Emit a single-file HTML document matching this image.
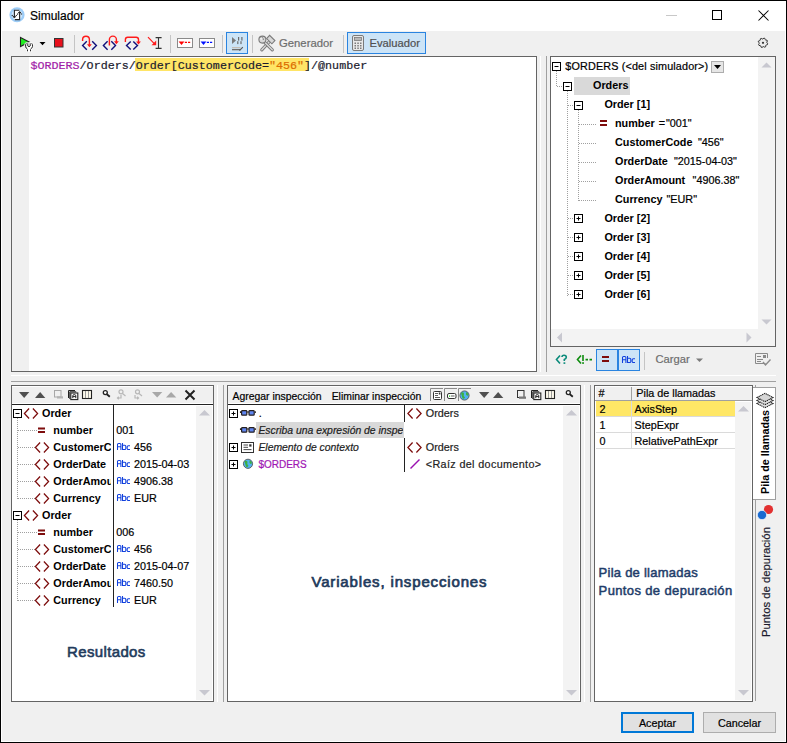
<!DOCTYPE html>
<html><head><meta charset="utf-8">
<style>
*{margin:0;padding:0;box-sizing:border-box}
html,body{width:787px;height:743px;overflow:hidden;background:#f0f0f0}
body{position:relative;font-family:"Liberation Sans",sans-serif;font-size:10.8px;color:#000}
.a{position:absolute}
.t{position:absolute;white-space:nowrap;line-height:16px;-webkit-text-stroke:0.2px currentColor}
.b{font-weight:bold;-webkit-text-stroke:0}
.box{position:absolute;border:1px solid #646464;background:#fff}
.sep{position:absolute;width:1px;background:#c8c8c8}
svg{position:absolute;overflow:visible}
.mono{font-family:"Liberation Mono",monospace}
</style></head><body>
<!-- window frame -->
<div class="a" style="left:0;top:0;width:787px;height:743px;border:1px solid #000;background:#f0f0f0"></div>
<div class="a" style="left:1px;top:1px;width:785px;height:741px;border-left:1px solid #fff;border-right:1px solid #fff;border-bottom:1px solid #fff"></div>
<!-- title bar -->
<div class="a" style="left:1px;top:1px;width:785px;height:30px;background:#fff"></div>
<div id="title">
<svg style="left:9px;top:7px" width="16" height="16" viewBox="0 0 16 16">
<circle cx="8" cy="7.75" r="7.6" fill="#9dcdf8"/>
<circle cx="8" cy="7.75" r="5.4" fill="#cfe7fc"/>
<rect x="5.4" y="3.3" width="5.2" height="9.3" fill="#fff"/>
<path d="M5.4 10 V3.3 H10.4 M5.8 12.6 H10.6 V5.6" fill="none" stroke="#252525" stroke-width="1.1"/>
<path d="M2.8 8.2 L5.4 10.5 L10.6 5 L13 7.4" fill="none" stroke="#252525" stroke-width="1.1" stroke-dasharray="1.2 0.7"/>
<path d="M3.9 9.2 H6.9 L5.4 11.2 Z M9.1 6 H12.1 L10.6 4 Z" fill="#252525"/>
</svg>
<div class="t" style="left:30px;top:8px;font-size:12px;color:#000">Simulador</div>
<div class="a" style="left:666px;top:15px;width:11px;height:1px;background:#c8c8c8"></div>
<div class="a" style="left:712px;top:10px;width:10px;height:10px;border:1px solid #000"></div>
<svg style="left:758px;top:10px" width="11" height="11" viewBox="0 0 11 11"><path d="M0.5 0.5 L10.5 10.5 M10.5 0.5 L0.5 10.5" stroke="#000" stroke-width="1.05"/></svg>
</div>
<div id="toolbar">
<div class="a" style="left:226px;top:32px;width:22px;height:22px;background:#cce4f7;border:1px solid #2a84e0"></div>
<div class="a" style="left:347px;top:32px;width:79px;height:22px;background:#cce4f7;border:1px solid #2a84e0"></div>
<div class="t" style="left:279px;top:35px;font-size:11.3px;color:#6d6d6d">Generador</div>
<div class="t" style="left:369.5px;top:35px;font-size:11.2px;color:#505050">Evaluador</div>
<svg style="left:0;top:0" width="787" height="743" viewBox="0 0 787 743">
<!-- separators -->
<g fill="#c4c4c4"><rect x="74" y="35" width="1" height="18"/><rect x="170" y="35" width="1" height="18"/><rect x="222" y="35" width="1" height="18"/><rect x="252" y="35" width="1" height="18"/><rect x="343" y="35" width="1" height="18"/></g>
<!-- play -->
<path d="M20.5 37.5 L29.2 42 L20.5 46.5 Z" fill="#22ee22" stroke="#222" stroke-width="1.1"/>
<path d="M24.3 44.5 Q24.3 42.5 26.5 42.2 H31.5 Q33.8 42.5 33.8 45.5 Q33.6 48.5 31.5 49.5 V52 H26.5 V49.5 Q24.3 48.5 24.3 45.5Z" fill="#fff" opacity="0.9"/>
<path d="M26.5 43.5 Q25.5 44.5 25.5 46 Q25.8 48.2 27.3 49" fill="#d8d8d8"/><path d="M26.3 43.3 Q25.2 44.6 25.4 46.3 Q25.8 48.3 27.4 49 M31.7 43.3 Q32.8 44.6 32.6 46.3 Q32.2 48.3 30.6 49 M27.8 43.3 V46 Q29 47.5 30.2 46 V43.3 M27.5 49.5 V51.3 M30.5 49.5 V51.3" fill="none" stroke="#2a2a2a" stroke-width="1"/>
<path d="M39.5 42 H45.5 L42.5 45.3 Z" fill="#000"/>
<rect x="54.5" y="38.5" width="8.5" height="8.5" fill="#e8101c" stroke="#333" stroke-width="1"/>
<!-- step into -->
<g fill="none" stroke-width="1.4">
<path d="M82.6 41 V39.6 A3.3 3.3 0 0 1 89.4 39.6 V46" stroke="#ff1a1a"/>
<path d="M86.8 41.3 L82.6 45.5 L86.8 49.8 M92.2 41.3 L96.4 45.5 L92.2 49.8" stroke="#10107a"/>
<path d="M107.6 41.3 L103.4 45.5 L107.6 49.8 M111.3 41.3 L115.5 45.5 L111.3 49.8" stroke="#10107a"/>
<path d="M109.4 45.5 V39.6 A3.4 3.4 0 0 1 116.4 39.6 V43" stroke="#ff1a1a"/>
<path d="M125.4 42 V39.5 A2.3 2.3 0 0 1 127.7 37.3 H136.2 A2.3 2.3 0 0 1 138.5 39.5 V43" stroke="#ff1a1a"/>
<path d="M130.7 41.4 L126.5 45.5 L130.7 49.6 M133.3 41.4 L137.5 45.5 L133.3 49.6" stroke="#10107a"/>
<path d="M148 37.2 L155 44.3" stroke="#ff1a1a" stroke-width="1.2"/>
<path d="M158.5 37.6 V48.4 M155.6 37.6 H161.6 M155.6 48.4 H161.6" stroke="#333" stroke-width="1.1"/>
</g>
<g fill="#ff1a1a">
<path d="M87 44.2 H91.8 L89.4 47.2 Z"/><path d="M114 41.3 H118.8 L116.4 44.3 Z"/><path d="M136.1 41.4 H140.9 L138.5 44.4 Z"/>
<path d="M156.2 40.5 V45.2 H151.5 Z"/>
</g>
<!-- breakpoints -->
<rect x="177.5" y="38.5" width="15" height="9" fill="#fff" stroke="#8a8a8a"/>
<path d="M178.6 41.6 H184.4 L181.5 45 Z" fill="#ff0000"/><path d="M184.8 42.4 h2.2 M188 42.4 h2.2" stroke="#ff0000" stroke-width="1.3"/>
<rect x="199.5" y="38.5" width="15" height="9" fill="#fff" stroke="#8a8a8a"/>
<path d="M200.6 41.6 H206.4 L203.5 45 Z" fill="#0010ff"/><path d="M206.8 42.4 h2.2 M210 42.4 h2.2" stroke="#0010ff" stroke-width="1.3"/>
<!-- pressed icon -->
<path d="M232 37 L236 40.5 L232 44 Z" fill="#7a7a7a"/>
<g fill="#6a6a6a"><rect x="238" y="37" width="1.2" height="3.6"/><rect x="237.2" y="41.2" width="1.2" height="2.9"/><rect x="241.3" y="37" width="1.2" height="3.6"/><rect x="240.4" y="41.2" width="1.2" height="2.9"/></g>
<rect x="232" y="47" width="8.5" height="1.3" fill="#c4bdb6"/><rect x="232" y="49" width="8" height="1.3" fill="#6e6e6e"/>
<path d="M239.5 50.6 L242.8 47.2" stroke="#555" stroke-width="1.1"/>
<!-- wrench/hammer -->
<g stroke-linecap="round">
<path d="M269.5 41.5 L261.8 49.8" stroke="#7a7a7a" stroke-width="3.2"/><path d="M269.5 41.5 L261.8 49.8" stroke="#dadada" stroke-width="1.3"/>
<path d="M264.2 41.8 L272.3 49.8" stroke="#7a7a7a" stroke-width="3.2"/><path d="M264.2 41.8 L272.3 49.8" stroke="#dadada" stroke-width="1.3"/>
</g>
<path d="M266.6 38.6 L269.6 35.4 L274.9 40.6 L271.9 43.8 Z" fill="#d8d8d8" stroke="#7a7a7a" stroke-width="1.1"/>
<circle cx="262.4" cy="39.6" r="3.5" fill="#d8d8d8" stroke="#7a7a7a" stroke-width="1.1"/>
<path d="M259.5 37.5 L262 37.2 L263.6 39.7" fill="none" stroke="#7a7a7a" stroke-width="1.1"/><circle cx="261.4" cy="38.5" r="1.2" fill="#f0f0f0"/>
<!-- calculator -->
<rect x="352.5" y="35.5" width="11" height="15" rx="1.5" fill="#e8e8e8" stroke="#7a7a7a"/>
<rect x="354.5" y="37.5" width="7" height="3" fill="#b8b8b8" stroke="#7a7a7a" stroke-width="0.8"/>
<g fill="#7a7a7a"><rect x="354.5" y="42.5" width="1.5" height="1.5"/><rect x="357.3" y="42.5" width="1.5" height="1.5"/><rect x="360" y="42.5" width="1.5" height="1.5"/><rect x="354.5" y="45" width="1.5" height="1.5"/><rect x="357.3" y="45" width="1.5" height="1.5"/><rect x="360" y="45" width="1.5" height="1.5"/><rect x="354.5" y="47.5" width="1.5" height="1.5"/><rect x="357.3" y="47.5" width="1.5" height="1.5"/><rect x="360" y="47.5" width="1.5" height="1.5"/></g>
<!-- gear -->
<path d="M767.70 43.75 L767.43 44.65 L766.23 44.98 L765.75 45.57 L765.65 46.80 L764.82 47.24 L763.75 46.63 L762.99 46.70 L762.05 47.50 L761.15 47.23 L760.82 46.03 L760.23 45.55 L759.00 45.45 L758.56 44.62 L759.17 43.55 L759.10 42.79 L758.30 41.85 L758.57 40.95 L759.77 40.62 L760.25 40.03 L760.35 38.80 L761.18 38.36 L762.25 38.97 L763.01 38.90 L763.95 38.10 L764.85 38.37 L765.18 39.57 L765.77 40.05 L767.00 40.15 L767.44 40.98 L766.83 42.05 L766.90 42.81 Z" fill="#ececec" stroke="#333" stroke-width="1"/>
<circle cx="763" cy="42.8" r="1.1" fill="#333"/>
</svg>
</div>
<div id="editor">
<div class="box" style="left:11px;top:56px;width:526px;height:316px"></div>
<div class="a" style="left:12px;top:57px;width:17px;height:314px;background:#f0f0f0"></div>
<div class="a" style="left:135px;top:58px;width:174px;height:13px;background:#ffe566"></div>
<div class="t mono" style="left:30.5px;top:59px;font-size:11.7px;line-height:14px;color:#1b1b2e"><span style="color:#a21ca8">$ORDERS</span>/Orders/Order[CustomerCode=<span style="color:#dc6c00">"456"</span>]/@number</div>
<div class="a" style="left:540px;top:56px;width:1px;height:316px;background:#fff"></div>
<div class="a" style="left:546px;top:56px;width:1px;height:316px;background:#a0a0a0"></div>
<!-- horizontal splitter -->
<div class="a" style="left:11px;top:375px;width:765px;height:1px;background:#fff"></div>
<div class="a" style="left:11px;top:381px;width:765px;height:1px;background:#a0a0a0"></div>
</div>
<div id="tree">
<div class="box" style="left:550px;top:56px;width:226px;height:291px"></div>
<div class="a" style="left:758px;top:57px;width:17px;height:272px;background:#f3f3f3"></div>
<div class="a" style="left:551px;top:329px;width:224px;height:17px;background:#f3f3f3"></div>
<div class="a" style="left:574px;top:77px;width:56px;height:18px;background:#d9d9d9"></div>
<div class="t " style="left:565.3px;top:57px;line-height:19px;letter-spacing:0.15px">$ORDERS (&lt;del simulador&gt;)</div>
<div class="t b" style="left:593px;top:76px;line-height:19px">Orders</div>
<div class="t b" style="left:604.4px;top:95px;line-height:19px">Order [1]</div>
<div class="t b" style="left:615px;top:114px;line-height:19px">number</div>
<div class="t " style="left:658.8px;top:114px;line-height:19px">=</div>
<div class="t " style="left:666px;top:114px;line-height:19px">"001"</div>
<div class="t b" style="left:615px;top:133px;line-height:19px">CustomerCode</div>
<div class="t " style="left:698px;top:133px;line-height:19px">"456"</div>
<div class="t b" style="left:615px;top:152px;line-height:19px">OrderDate</div>
<div class="t " style="left:674px;top:152px;line-height:19px">"2015-04-03"</div>
<div class="t b" style="left:615px;top:171px;line-height:19px">OrderAmount</div>
<div class="t " style="left:692.6px;top:171px;line-height:19px">"4906.38"</div>
<div class="t b" style="left:615px;top:190px;line-height:19px">Currency</div>
<div class="t " style="left:666.5px;top:190px;line-height:19px">"EUR"</div>
<div class="t b" style="left:604.4px;top:209px;line-height:19px">Order [2]</div>
<div class="t b" style="left:604.4px;top:228px;line-height:19px">Order [3]</div>
<div class="t b" style="left:604.4px;top:247px;line-height:19px">Order [4]</div>
<div class="t b" style="left:604.4px;top:266px;line-height:19px">Order [5]</div>
<div class="t b" style="left:604.4px;top:285px;line-height:19px">Order [6]</div>
<!-- tree bottom toolbar -->
<div class="a" style="left:596px;top:349px;width:22px;height:22px;background:#cce4f7;border:1px solid #2a84e0"></div>
<div class="a" style="left:618px;top:349px;width:22px;height:22px;background:#cce4f7;border:1px solid #2a84e0"></div>
<div class="t" style="left:655.5px;top:351px;font-size:11.2px;color:#6d6d6d">Cargar</div>
<svg style="left:0;top:0" width="787" height="743" viewBox="0 0 787 743">
<g stroke="#a0a0a0" stroke-width="1" stroke-dasharray="1 1" fill="none">
<path d="M556.5 71 V86 M557 86.5 H563"/>
<path d="M567.5 91 V296 M568 105.5 H574 M568 218.5 H574 M568 237.5 H574 M568 256.5 H574 M568 275.5 H574 M568 294.5 H574"/>
<path d="M578.5 110 V201 M579 124.5 H597 M579 143.5 H597 M579 162.5 H597 M579 181.5 H597 M579 200.5 H597"/>
</g>
<g fill="#fff" stroke="#000" stroke-width="1">
<rect x="552.5" y="62.5" width="8" height="8"/><rect x="563.5" y="82.5" width="8" height="8"/><rect x="574.5" y="101.5" width="8" height="8"/>
<rect x="574.5" y="214.5" width="8" height="8"/><rect x="574.5" y="233.5" width="8" height="8"/><rect x="574.5" y="252.5" width="8" height="8"/><rect x="574.5" y="271.5" width="8" height="8"/><rect x="574.5" y="290.5" width="8" height="8"/>
</g>
<g stroke="#000" stroke-width="1">
<path d="M554.5 66.5 H558.5 M565.5 86.5 H569.5 M576.5 105.5 H580.5"/>
<path d="M576.5 218.5 H580.5 M578.5 216.5 V220.5 M576.5 237.5 H580.5 M578.5 235.5 V239.5 M576.5 256.5 H580.5 M578.5 254.5 V258.5 M576.5 275.5 H580.5 M578.5 273.5 V277.5 M576.5 294.5 H580.5 M578.5 292.5 V296.5"/>
</g>
<g fill="#7e0d0d"><rect x="600" y="120" width="7" height="2"/><rect x="600" y="124" width="7" height="2"/></g>
<!-- dropdown button -->
<rect x="711.5" y="61.5" width="12" height="11" fill="#e6e6e6" stroke="#adadad"/>
<path d="M714 65 H721 L717.5 69 Z" fill="#000"/>
<!-- scroll arrows -->
<g fill="#c8c8d0">
<path d="M761.5 67.5 L766.5 62.5 L771.5 67.5 Z"/><path d="M761.5 319.5 L766.5 324.5 L771.5 319.5 Z"/>
<path d="M562 332.5 L557 337.5 L562 342.5 Z"/><path d="M746.5 332.5 L751.5 337.5 L746.5 342.5 Z"/>
</g>
<!-- bottom toolbar icons -->
<g fill="none" stroke="#0a8a7a" stroke-width="1.6"><path d="M560 355.5 L556.5 359.5 L560 363.5"/><path d="M562 357 Q562 355.3 564 355.3 Q566.3 355.3 566.3 357.3 Q566.3 358.8 564.3 359.5 V361"/></g>
<rect x="563.5" y="362.3" width="1.8" height="1.6" fill="#0a8a7a"/>
<g fill="none" stroke="#0e8c0e" stroke-width="1.6"><path d="M581 355.5 L577.5 359.5 L581 363.5"/><path d="M583 355 V361 M585.5 359.6 h2.5 M589.5 359.6 h2.5"/></g>
<rect x="582.2" y="362.2" width="1.7" height="1.7" fill="#0e8c0e"/>
<g fill="#7e0d0d"><rect x="602" y="356" width="7" height="2"/><rect x="602" y="360" width="7" height="2"/></g>
<rect x="644" y="352" width="1" height="18" fill="#c4c4c4"/>
<path d="M696 358.5 H703 L699.5 362 Z" fill="#7a7a7a"/>
<g fill="none" stroke="#8a8a8a" stroke-width="1"><path d="M765.5 363.5 H755.5 V353.5 H767.5 V358"/><path d="M757 356.5 H761 M757 359.5 H763 M757 361.5 H761"/><path d="M763 362 L765.5 365 L770.5 359.5" stroke-width="1.4"/></g>
<rect x="763" y="355" width="3" height="3" fill="#8a8a8a"/>
</svg>

</div>
<div class="a" style="left:217px;top:385px;width:1px;height:317px;background:#fff"></div>
<div class="a" style="left:223px;top:385px;width:1px;height:317px;background:#a0a0a0"></div>
<div class="a" style="left:584px;top:385px;width:1px;height:317px;background:#fff"></div>
<div class="a" style="left:590px;top:385px;width:1px;height:317px;background:#a0a0a0"></div>
<div id="results">
<div class="box" style="left:11px;top:385px;width:203px;height:317px;background:#fff"></div>
<div class="a" style="left:12px;top:386px;width:201px;height:18px;background:#f0f0f0;border-top:1px solid #fff;border-bottom:1px solid #fff"></div>
<div class="a" style="left:12px;top:404px;width:201px;height:1px;background:#222"></div>
<div class="a" style="left:196px;top:406px;width:16px;height:294px;background:#f3f3f3"></div>
<div class="a" style="left:113px;top:405px;width:1px;height:202px;background:#222"></div>
<div class="a" style="left:12px;top:405px;width:99px;height:210px;overflow:hidden">
<div class="t b" style="left:30px;top:0px;line-height:17px">Order</div>
<div class="t b" style="left:41.3px;top:17px;line-height:17px">number</div>
<div class="t b" style="left:41.3px;top:34px;line-height:17px">CustomerCode</div>
<div class="t b" style="left:41.3px;top:51px;line-height:17px">OrderDate</div>
<div class="t b" style="left:41.3px;top:68px;line-height:17px">OrderAmount</div>
<div class="t b" style="left:41.3px;top:85px;line-height:17px">Currency</div>
<div class="t b" style="left:30px;top:102px;line-height:17px">Order</div>
<div class="t b" style="left:41.3px;top:119px;line-height:17px">number</div>
<div class="t b" style="left:41.3px;top:136px;line-height:17px">CustomerCode</div>
<div class="t b" style="left:41.3px;top:153px;line-height:17px">OrderDate</div>
<div class="t b" style="left:41.3px;top:170px;line-height:17px">OrderAmount</div>
<div class="t b" style="left:41.3px;top:187px;line-height:17px">Currency</div>
</div>
<div class="t" style="left:116.3px;top:422px;line-height:17px">001</div>
<div class="t" style="left:134px;top:439px;line-height:17px">456</div>
<div class="t" style="left:134px;top:456px;line-height:17px">2015-04-03</div>
<div class="t" style="left:134px;top:473px;line-height:17px">4906.38</div>
<div class="t" style="left:134px;top:490px;line-height:17px">EUR</div>
<div class="t" style="left:116.3px;top:524px;line-height:17px">006</div>
<div class="t" style="left:134px;top:541px;line-height:17px">456</div>
<div class="t" style="left:134px;top:558px;line-height:17px">2015-04-07</div>
<div class="t" style="left:134px;top:575px;line-height:17px">7460.50</div>
<div class="t" style="left:134px;top:592px;line-height:17px">EUR</div>
<div class="t" style="left:67px;top:640px;font-size:15px;letter-spacing:0.36px;-webkit-text-stroke:0.6px #1f3b5c;line-height:24px;color:#1f3b5c">Resultados</div>
</div>
<div id="vars">
<div class="box" style="left:227px;top:385px;width:354px;height:317px;background:#fff"></div>
<div class="a" style="left:228px;top:386px;width:352px;height:18px;background:#f0f0f0;overflow:hidden;border-top:1px solid #fff;border-bottom:1px solid #fff">
<div class="t" style="left:4.6px;top:1px;font-size:10.4px;line-height:17px;color:#000">Agregar inspección</div>
<div class="t" style="left:103.7px;top:1px;font-size:10.4px;line-height:17px;color:#000">Eliminar inspección</div>
</div>
<div class="a" style="left:228px;top:404px;width:352px;height:1px;background:#222"></div>
<div class="a" style="left:563px;top:406px;width:16px;height:294px;background:#f3f3f3"></div>
<div class="a" style="left:256px;top:422px;width:148px;height:16px;background:#d9d9d9"></div>
<div class="a" style="left:404px;top:405px;width:1px;height:17px;background:#222"></div>
<div class="a" style="left:404px;top:438px;width:1px;height:34px;background:#222"></div>
<div class="t" style="left:258.8px;top:405px;line-height:17px">.</div>
<div class="a" style="left:256px;top:422px;width:147px;height:17px;overflow:hidden"><div class="t" style="left:2.4px;top:0;line-height:17px;font-style:italic;font-size:10.4px;color:#222">Escriba una expresión de inspección</div></div>
<div class="t" style="left:258.4px;top:439px;line-height:17px;font-style:italic;font-size:10.4px;color:#222">Elemento de contexto</div>
<div class="t" style="left:258.4px;top:456px;font-size:10px;line-height:17px;color:#a016b4">$ORDERS</div>
<div class="t" style="left:425.8px;top:405px;line-height:17px;color:#222">Orders</div>
<div class="t" style="left:425.8px;top:439px;line-height:17px;color:#222">Orders</div>
<div class="t" style="left:425.8px;top:456px;line-height:17px;letter-spacing:0.35px;color:#222">&lt;Raíz del documento&gt;</div>
<div class="t" style="left:311.4px;top:570px;font-size:15px;letter-spacing:0.85px;-webkit-text-stroke:0.7px #1f3b5c;line-height:24px;color:#1f3b5c">Variables, inspecciones</div>
</div>
<div id="stack">
<div class="box" style="left:594px;top:385px;width:159px;height:317px;background:#fff"></div>
<div class="a" style="left:595px;top:386px;width:157px;height:14px;background:#f0f0f0;border-top:1px solid #fff;border-left:1px solid #fff"></div>
<div class="a" style="left:595px;top:400px;width:157px;height:1px;background:#a0a0a0"></div>
<div class="a" style="left:631px;top:387px;width:1px;height:13px;background:#a0a0a0"></div>
<div class="t" style="left:598.5px;top:385px;line-height:16px">#</div>
<div class="t" style="left:636.3px;top:385px;line-height:16px">Pila de llamadas</div>
<div class="a" style="left:596px;top:401px;width:139px;height:15px;background:#ffe766"></div>
<div class="a" style="left:735px;top:402px;width:16px;height:298px;background:#f3f3f3"></div>
<div class="a" style="left:596px;top:416px;width:139px;height:1px;background:#dadada"></div>
<div class="a" style="left:596px;top:432px;width:139px;height:1px;background:#dadada"></div>
<div class="a" style="left:596px;top:448px;width:139px;height:1px;background:#dadada"></div>
<div class="a" style="left:631px;top:401px;width:1px;height:47px;background:#dadada"></div>
<div class="t" style="left:599.6px;top:401px;line-height:16px">2</div>
<div class="t" style="left:634.5px;top:401px;line-height:16px">AxisStep</div>
<div class="t" style="left:599.6px;top:417px;line-height:16px">1</div>
<div class="t" style="left:634.5px;top:417px;line-height:16px">StepExpr</div>
<div class="t" style="left:599.6px;top:433px;line-height:16px">0</div>
<div class="t" style="left:634.5px;top:433px;line-height:16px">RelativePathExpr</div>
<div class="t" style="left:598.6px;top:564px;font-size:13px;letter-spacing:0.25px;-webkit-text-stroke:0.5px #1f3d6a;line-height:18px;color:#1f3d6a">Pila de llamadas</div>
<div class="t" style="left:598.6px;top:582px;font-size:13px;letter-spacing:0.37px;-webkit-text-stroke:0.5px #1f3d6a;line-height:18px;color:#1f3d6a">Puntos de depuración</div>
<div class="a" style="left:753px;top:387px;width:23px;height:113px;background:#fff;border-top:1px solid #a0a0a0;border-right:1px solid #a0a0a0;border-bottom:1px solid #a0a0a0"></div>
<div class="a" style="left:755px;top:385px;width:1px;height:3px;background:#a0a0a0"></div>
<div class="a" style="left:755px;top:500px;width:1px;height:201px;background:#a0a0a0"></div>
<div class="t b" style="left:757px;top:494px;line-height:16px;transform-origin:0 0;transform:rotate(-90deg)">Pila de llamadas</div>
<div class="t" style="left:758px;top:637px;font-size:11.3px;line-height:16px;transform-origin:0 0;transform:rotate(-90deg);color:#1b1b2e">Puntos de depuración</div>
</div>
<div id="buttons">
<div class="a" style="left:621px;top:712px;width:73px;height:21px;background:#e1e1e1;border:2px solid #0078d7"></div>
<div class="t" style="left:621px;top:713px;width:73px;line-height:21px;text-align:center">Aceptar</div>
<div class="a" style="left:703px;top:712px;width:73px;height:21px;background:#e1e1e1;border:1px solid #adadad"></div>
<div class="t" style="left:703px;top:713px;width:73px;line-height:21px;text-align:center">Cancelar</div>
</div>
<!-- BOTTOMSVG -->
<svg style="left:0;top:0" width="787" height="743" viewBox="0 0 787 743">
<path d="M19 392 H29.3 L24.15 398 Z" fill="#505050"/>
<path d="M35 398 H45.3 L40.15 392 Z" fill="#505050"/>
<g fill="none" stroke="#a8a8a8" stroke-width="1"><rect x="54.5" y="390.5" width="6.5" height="6.5"/></g><rect x="57" y="396.3" width="6" height="2.2" fill="#b4b4b4"/>
<path d="M68.5 398 V390.5 H75 M69.8 399 V391.8 H76.2" fill="none" stroke="#222" stroke-width="1"/><rect x="70.8" y="393" width="7" height="6.6" fill="#fff" stroke="#222" stroke-width="1.1"/><path d="M72.8 398.2 V395.8 Q72.8 394.6 74.3 394.6 Q75.8 394.6 75.8 395.8 V398.2 M72.8 396.6 H75.8" fill="none" stroke="#222" stroke-width="1"/>

<rect x="82.5" y="390.5" width="9" height="8" fill="#fbf8ea" stroke="#222" stroke-width="1.1"/><path d="M85.5 391 V398 M88.5 391 V398" stroke="#9a9a9a"/>
<circle cx="105.3" cy="392.6" r="2" fill="#fff" stroke="#222" stroke-width="1.3"/><path d="M106.8 394.2 L109.8 396.8" stroke="#222" stroke-width="1.8"/>
<g fill="none" stroke="#b8b8b8" stroke-width="1.2"><circle cx="121" cy="391.8" r="2"/><path d="M122.5 393.5 L125.5 396"/><path d="M121 395 V398 H117.5 M118.8 396.8 L117.5 398 L118.8 399.2"/>
<circle cx="137.5" cy="391.8" r="2"/><path d="M139 393.5 L142 396"/><path d="M135 395 V398 H138.5 M137.2 396.8 L138.5 398 L137.2 399.2"/></g>
<path d="M152 392 H162.3 L157.15 397.6 Z" fill="#a8a8a8"/><path d="M166 397.6 H176.3 L171.15 392 Z" fill="#a8a8a8"/>
<path d="M185.5 390.5 L194.5 399.5 M194.5 390.5 L185.5 399.5" stroke="#222" stroke-width="2"/>
<rect x="13.5" y="409.5" width="8" height="8" fill="#fff" stroke="#000"/><path d="M15.5 413.5 H19.5" stroke="#000"/>
<path d="M29.10 408.55 L24.40 413.55 L29.10 418.55 M32.90 408.55 L37.60 413.55 L32.90 418.55" fill="none" stroke="#7c0c0c" stroke-width="1.25"/>
<g stroke="#a0a0a0" stroke-dasharray="1 1" fill="none">
<path d="M17.5 418 V499"/>
<path d="M18 430.5 H37"/>
<path d="M18 447.5 H35"/>
<path d="M18 464.5 H35"/>
<path d="M18 481.5 H35"/>
<path d="M18 498.5 H35"/>
</g>
<g fill="#7e0d0d"><rect x="38" y="427.5" width="7" height="2"/><rect x="38" y="431.0" width="7" height="2"/></g>
<path d="M40.10 442.55 L35.40 447.55 L40.10 452.55 M43.90 442.55 L48.60 447.55 L43.90 452.55" fill="none" stroke="#7c0c0c" stroke-width="1.25"/>
<path d="M40.10 459.55 L35.40 464.55 L40.10 469.55 M43.90 459.55 L48.60 464.55 L43.90 469.55" fill="none" stroke="#7c0c0c" stroke-width="1.25"/>
<path d="M40.10 476.55 L35.40 481.55 L40.10 486.55 M43.90 476.55 L48.60 481.55 L43.90 486.55" fill="none" stroke="#7c0c0c" stroke-width="1.25"/>
<path d="M40.10 493.55 L35.40 498.55 L40.10 503.55 M43.90 493.55 L48.60 498.55 L43.90 503.55" fill="none" stroke="#7c0c0c" stroke-width="1.25"/>
<rect x="13.5" y="511.5" width="8" height="8" fill="#fff" stroke="#000"/><path d="M15.5 515.5 H19.5" stroke="#000"/>
<path d="M29.10 510.55 L24.40 515.55 L29.10 520.55 M32.90 510.55 L37.60 515.55 L32.90 520.55" fill="none" stroke="#7c0c0c" stroke-width="1.25"/>
<g stroke="#a0a0a0" stroke-dasharray="1 1" fill="none">
<path d="M17.5 520 V601"/>
<path d="M18 532.5 H37"/>
<path d="M18 549.5 H35"/>
<path d="M18 566.5 H35"/>
<path d="M18 583.5 H35"/>
<path d="M18 600.5 H35"/>
</g>
<g fill="#7e0d0d"><rect x="38" y="529.5" width="7" height="2"/><rect x="38" y="533.0" width="7" height="2"/></g>
<path d="M40.10 544.55 L35.40 549.55 L40.10 554.55 M43.90 544.55 L48.60 549.55 L43.90 554.55" fill="none" stroke="#7c0c0c" stroke-width="1.25"/>
<path d="M40.10 561.55 L35.40 566.55 L40.10 571.55 M43.90 561.55 L48.60 566.55 L43.90 571.55" fill="none" stroke="#7c0c0c" stroke-width="1.25"/>
<path d="M40.10 578.55 L35.40 583.55 L40.10 588.55 M43.90 578.55 L48.60 583.55 L43.90 588.55" fill="none" stroke="#7c0c0c" stroke-width="1.25"/>
<path d="M40.10 595.55 L35.40 600.55 L40.10 605.55 M43.90 595.55 L48.60 600.55 L43.90 605.55" fill="none" stroke="#7c0c0c" stroke-width="1.25"/>
<path d="M19 0" />
<g fill="#c8c8d0"><path d="M199 415.5 L204.5 410 L210 415.5 Z"/><path d="M199 690 L204.5 695.5 L210 690 Z"/>
<path d="M566 415.5 L571.5 410 L577 415.5 Z"/><path d="M566 690 L571.5 695.5 L577 690 Z"/>
<path d="M738 411.5 L743.5 406 L749 411.5 Z"/><path d="M738 690 L743.5 695.5 L749 690 Z"/></g>
<g fill="none" stroke="#8a8a8a"><path d="M430.5 401 V388.5 H443 M444.5 401 V388.5 H457 M458.5 401 V388.5 H471"/></g>
<rect x="433.5" y="391.5" width="8" height="8" rx="1" fill="#fff" stroke="#333"/><path d="M435 393.5 H438 M435 395.5 H438 M435 397.5 H440" stroke="#333" stroke-width="0.8"/><rect x="438.8" y="392.5" width="1.6" height="2" fill="#333"/>
<rect x="447.5" y="393.5" width="8.5" height="5" rx="1.5" fill="#fff" stroke="#333"/><rect x="449" y="395.5" width="1.2" height="1.3" fill="#20d020"/><path d="M451 396 H454.5" stroke="#333" stroke-width="0.8"/>
<circle cx="464.5" cy="395.5" r="4.6" fill="#52b0f0" stroke="#4a4a4a" stroke-width="0.8"/><path d="M461 393 Q463 391.5 464 393.5 Q463 396 465 397.5 Q464 399.5 462.5 398.5 Z M466 392 Q468.5 393 468.5 395 Q467 396.5 466 394.5 Z" fill="#3cb043"/>
<path d="M479 392 H489.3 L484.15 398 Z" fill="#505050"/><path d="M493 398 H503.3 L498.15 392 Z" fill="#505050"/>
<g fill="none" stroke="#333" stroke-width="1"><rect x="517.5" y="390.5" width="6.5" height="7"/></g><rect x="519" y="396.5" width="7" height="2.3" fill="#777"/>
<path d="M531.5 398 V390.5 H538 M532.8 399 V391.8 H539.2" fill="none" stroke="#222" stroke-width="1"/><rect x="533.8" y="393" width="7" height="6.6" fill="#fff" stroke="#222" stroke-width="1.1"/><path d="M535.8 398.2 V395.8 Q535.8 394.6 537.3 394.6 Q538.8 394.6 538.8 395.8 V398.2 M535.8 396.6 H538.8" fill="none" stroke="#222" stroke-width="1"/>

<rect x="545.5" y="390.5" width="9" height="8" fill="#fbf8ea" stroke="#222" stroke-width="1.1"/><path d="M548.5 391 V398 M551.5 391 V398" stroke="#9a9a9a"/>
<circle cx="568.3" cy="392.6" r="2" fill="#fff" stroke="#222" stroke-width="1.3"/><path d="M569.8 394.2 L572.8 396.8" stroke="#222" stroke-width="1.8"/>
<rect x="229.5" y="409.5" width="8" height="8" fill="#fff" stroke="#000"/><path d="M231.5 413.5 H235.5" stroke="#000"/><path d="M233.5 411.5 V415.5" stroke="#000"/>
<rect x="229.5" y="443.5" width="8" height="8" fill="#fff" stroke="#000"/><path d="M231.5 447.5 H235.5" stroke="#000"/><path d="M233.5 445.5 V449.5" stroke="#000"/>
<rect x="229.5" y="460.5" width="8" height="8" fill="#fff" stroke="#000"/><path d="M231.5 464.5 H235.5" stroke="#000"/><path d="M233.5 462.5 V466.5" stroke="#000"/>
<g stroke="#262020" stroke-width="1.2" fill="#5f86f2"><rect x="241.6" y="410.6" width="5.2" height="4.6" rx="0.8"/><rect x="249" y="410.6" width="5.2" height="4.6" rx="0.8"/></g><path d="M246.8 412.0 H249 M240.5 411.2 V413.0 M255.3 411.2 V413.0" stroke="#262020" stroke-width="1.1"/>
<g stroke="#262020" stroke-width="1.2" fill="#5f86f2"><rect x="241.6" y="427.6" width="5.2" height="4.6" rx="0.8"/><rect x="249" y="427.6" width="5.2" height="4.6" rx="0.8"/></g><path d="M246.8 429.0 H249 M240.5 428.2 V430.0 M255.3 428.2 V430.0" stroke="#262020" stroke-width="1.1"/>
<rect x="241.5" y="442.5" width="12" height="10" fill="#fff" stroke="#333"/><path d="M243.5 445 H248 M243.5 447.3 H248 M243.5 449.6 H251.5" stroke="#333" stroke-width="0.9"/><rect x="249.2" y="444.3" width="2.3" height="2.3" fill="#333"/>
<circle cx="248" cy="463.8" r="4.6" fill="#52b0f0" stroke="#4a4a4a" stroke-width="0.8"/><path d="M244.5 461.3 Q246.5 459.8 247.5 461.8 Q246.5 464.3 248.5 465.8 Q247.5 467.8 246 466.8 Z M249.5 460.3 Q252 461.3 252 463.3 Q250.5 464.8 249.5 462.8 Z" fill="#3cb043"/>
<path d="M412.60 408.55 L407.90 413.55 L412.60 418.55 M416.40 408.55 L421.10 413.55 L416.40 418.55" fill="none" stroke="#7c0c0c" stroke-width="1.25"/>
<path d="M412.60 442.55 L407.90 447.55 L412.60 452.55 M416.40 442.55 L421.10 447.55 L416.40 452.55" fill="none" stroke="#7c0c0c" stroke-width="1.25"/>
<path d="M410.5 468.5 L419.5 459.5" stroke="#9a10b0" stroke-width="1.4"/>
<g fill="#e4e4e4" stroke="#1a1a1a" stroke-width="1.1" stroke-dasharray="1.3 0.7"><path d="M765 407.7 L773 403.5 L765 399.3 L757 403.5 Z"/><path d="M765 404.7 L773 400.5 L765 396.3 L757 400.5 Z"/><path d="M765 401.7 L773 397.5 L765 393.3 L757 397.5 Z" fill="#d6d6d6"/></g>
<circle cx="768.5" cy="509.5" r="4.6" fill="#e23030"/><circle cx="762" cy="515" r="4.6" fill="#1a6ad0" stroke="#fff" stroke-width="0.6"/>
</svg>
<!-- ENDBOTTOMSVG -->
<svg style="left:0;top:0" width="787" height="743" viewBox="0 0 787 743"><path transform="translate(622 356)" d="M0.5 7 V1.6 Q0.5 0.5 1.6 0.5 H2.8 Q3.9 0.5 3.9 1.6 V7 M0.5 3.7 H3.9 M5.5 0 V6.5 H7.7 Q8.8 6.5 8.8 5.4 V3.4 Q8.8 2.3 7.7 2.3 H5.5 M13 2.8 H11.3 Q10.2 2.8 10.2 3.9 V5.4 Q10.2 6.5 11.3 6.5 H13" fill="none" stroke="#1040dd" stroke-width="1.05"/><path transform="translate(117 443)" d="M0.5 7 V1.6 Q0.5 0.5 1.6 0.5 H2.8 Q3.9 0.5 3.9 1.6 V7 M0.5 3.7 H3.9 M5.5 0 V6.5 H7.7 Q8.8 6.5 8.8 5.4 V3.4 Q8.8 2.3 7.7 2.3 H5.5 M13 2.8 H11.3 Q10.2 2.8 10.2 3.9 V5.4 Q10.2 6.5 11.3 6.5 H13" fill="none" stroke="#1040dd" stroke-width="1.05"/><path transform="translate(117 460)" d="M0.5 7 V1.6 Q0.5 0.5 1.6 0.5 H2.8 Q3.9 0.5 3.9 1.6 V7 M0.5 3.7 H3.9 M5.5 0 V6.5 H7.7 Q8.8 6.5 8.8 5.4 V3.4 Q8.8 2.3 7.7 2.3 H5.5 M13 2.8 H11.3 Q10.2 2.8 10.2 3.9 V5.4 Q10.2 6.5 11.3 6.5 H13" fill="none" stroke="#1040dd" stroke-width="1.05"/><path transform="translate(117 477)" d="M0.5 7 V1.6 Q0.5 0.5 1.6 0.5 H2.8 Q3.9 0.5 3.9 1.6 V7 M0.5 3.7 H3.9 M5.5 0 V6.5 H7.7 Q8.8 6.5 8.8 5.4 V3.4 Q8.8 2.3 7.7 2.3 H5.5 M13 2.8 H11.3 Q10.2 2.8 10.2 3.9 V5.4 Q10.2 6.5 11.3 6.5 H13" fill="none" stroke="#1040dd" stroke-width="1.05"/><path transform="translate(117 494)" d="M0.5 7 V1.6 Q0.5 0.5 1.6 0.5 H2.8 Q3.9 0.5 3.9 1.6 V7 M0.5 3.7 H3.9 M5.5 0 V6.5 H7.7 Q8.8 6.5 8.8 5.4 V3.4 Q8.8 2.3 7.7 2.3 H5.5 M13 2.8 H11.3 Q10.2 2.8 10.2 3.9 V5.4 Q10.2 6.5 11.3 6.5 H13" fill="none" stroke="#1040dd" stroke-width="1.05"/><path transform="translate(117 545)" d="M0.5 7 V1.6 Q0.5 0.5 1.6 0.5 H2.8 Q3.9 0.5 3.9 1.6 V7 M0.5 3.7 H3.9 M5.5 0 V6.5 H7.7 Q8.8 6.5 8.8 5.4 V3.4 Q8.8 2.3 7.7 2.3 H5.5 M13 2.8 H11.3 Q10.2 2.8 10.2 3.9 V5.4 Q10.2 6.5 11.3 6.5 H13" fill="none" stroke="#1040dd" stroke-width="1.05"/><path transform="translate(117 562)" d="M0.5 7 V1.6 Q0.5 0.5 1.6 0.5 H2.8 Q3.9 0.5 3.9 1.6 V7 M0.5 3.7 H3.9 M5.5 0 V6.5 H7.7 Q8.8 6.5 8.8 5.4 V3.4 Q8.8 2.3 7.7 2.3 H5.5 M13 2.8 H11.3 Q10.2 2.8 10.2 3.9 V5.4 Q10.2 6.5 11.3 6.5 H13" fill="none" stroke="#1040dd" stroke-width="1.05"/><path transform="translate(117 579)" d="M0.5 7 V1.6 Q0.5 0.5 1.6 0.5 H2.8 Q3.9 0.5 3.9 1.6 V7 M0.5 3.7 H3.9 M5.5 0 V6.5 H7.7 Q8.8 6.5 8.8 5.4 V3.4 Q8.8 2.3 7.7 2.3 H5.5 M13 2.8 H11.3 Q10.2 2.8 10.2 3.9 V5.4 Q10.2 6.5 11.3 6.5 H13" fill="none" stroke="#1040dd" stroke-width="1.05"/><path transform="translate(117 596)" d="M0.5 7 V1.6 Q0.5 0.5 1.6 0.5 H2.8 Q3.9 0.5 3.9 1.6 V7 M0.5 3.7 H3.9 M5.5 0 V6.5 H7.7 Q8.8 6.5 8.8 5.4 V3.4 Q8.8 2.3 7.7 2.3 H5.5 M13 2.8 H11.3 Q10.2 2.8 10.2 3.9 V5.4 Q10.2 6.5 11.3 6.5 H13" fill="none" stroke="#1040dd" stroke-width="1.05"/></svg>
</body></html>
